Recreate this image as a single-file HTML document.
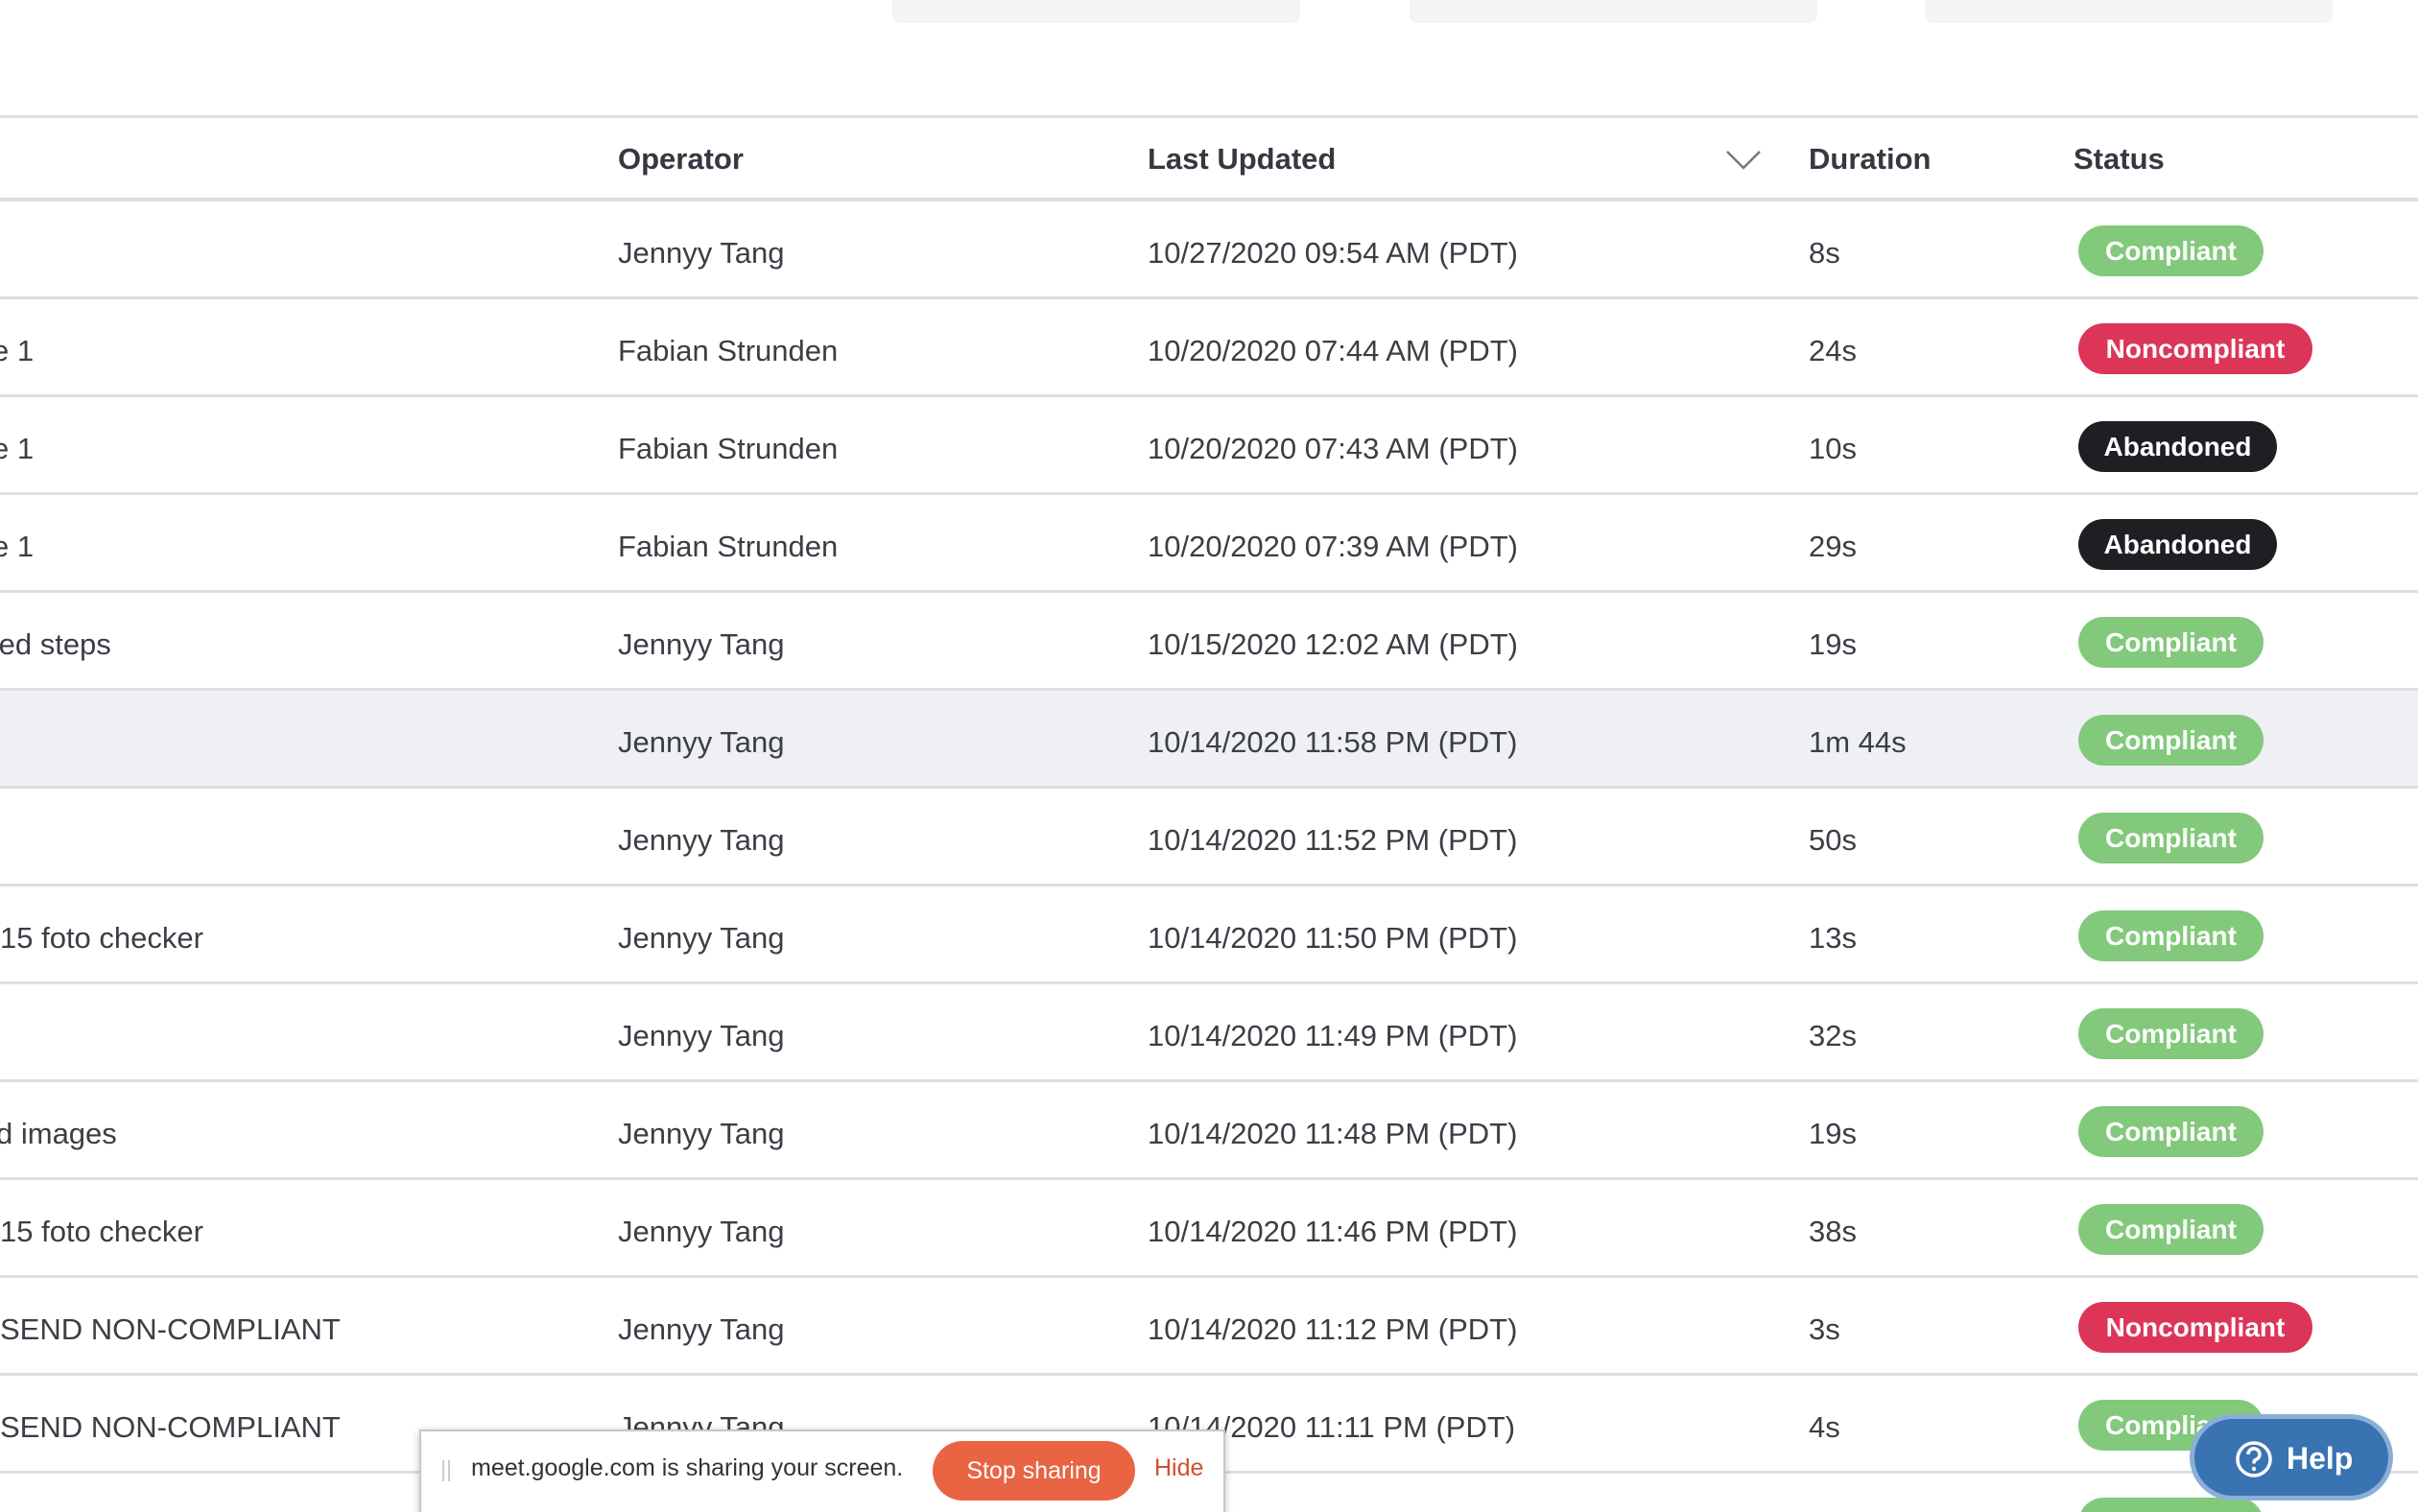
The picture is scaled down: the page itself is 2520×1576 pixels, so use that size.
<!DOCTYPE html>
<html><head><meta charset="utf-8"><style>
*{margin:0;padding:0;box-sizing:border-box}
html,body{width:2520px;height:1576px;overflow:hidden}
body{background:#fff;font-family:"Liberation Sans",sans-serif;color:#3b3e45;position:relative}
.tb{position:absolute;top:0;height:24px;width:425px;background:#f3f4f4;border-radius:0 0 8px 8px}
.hdr{position:absolute;left:0;width:2520px;top:120px;height:90px;border-top:3px solid #dcdfe2;border-bottom:4px solid #dcdfe2}
.h{position:absolute;top:25px;font-weight:bold;font-size:31px;color:#343840}
.row{position:absolute;left:0;width:2520px;height:102px;border-bottom:3px solid #dcdfe2}
.c{position:absolute;top:4px;line-height:100px;font-size:31px;white-space:nowrap}
.b{position:absolute;left:2166px;top:25px;height:53px;line-height:53px;border-radius:27px;color:#fff;font-weight:bold;font-size:28px;text-align:center}
.g{background:#82c97b;width:193px}.r{background:#dc3558;width:244px}.k{background:#1d1f23;width:207px}
</style></head><body>
<div class="tb" style="left:930px"></div><div class="tb" style="left:1469px"></div><div class="tb" style="left:2006px"></div>
<div class="hdr">
<div class="h" style="left:644px">Operator</div>
<div class="h" style="left:1196px">Last Updated</div>
<svg style="position:absolute;left:1798px;top:32px" width="38" height="24"><path d="M2 3 L19 20 L36 3" fill="none" stroke="#777" stroke-width="2.5"/></svg>
<div class="h" style="left:1885px">Duration</div>
<div class="h" style="left:2161px">Status</div>
</div>
<div class="row" style="top:210px"><div class="c" style="left:644px">Jennyy Tang</div><div class="c" style="left:1196px">10/27/2020 09:54 AM (PDT)</div><div class="c" style="left:1885px">8s</div><div class="b g">Compliant</div></div>
<div class="row" style="top:312px"><div class="c" style="left:-8px">e 1</div><div class="c" style="left:644px">Fabian Strunden</div><div class="c" style="left:1196px">10/20/2020 07:44 AM (PDT)</div><div class="c" style="left:1885px">24s</div><div class="b r">Noncompliant</div></div>
<div class="row" style="top:414px"><div class="c" style="left:-8px">e 1</div><div class="c" style="left:644px">Fabian Strunden</div><div class="c" style="left:1196px">10/20/2020 07:43 AM (PDT)</div><div class="c" style="left:1885px">10s</div><div class="b k">Abandoned</div></div>
<div class="row" style="top:516px"><div class="c" style="left:-8px">e 1</div><div class="c" style="left:644px">Fabian Strunden</div><div class="c" style="left:1196px">10/20/2020 07:39 AM (PDT)</div><div class="c" style="left:1885px">29s</div><div class="b k">Abandoned</div></div>
<div class="row" style="top:618px"><div class="c" style="left:-10px">ted steps</div><div class="c" style="left:644px">Jennyy Tang</div><div class="c" style="left:1196px">10/15/2020 12:02 AM (PDT)</div><div class="c" style="left:1885px">19s</div><div class="b g">Compliant</div></div>
<div class="row" style="top:720px;background:#eef0f3"><div class="c" style="left:644px">Jennyy Tang</div><div class="c" style="left:1196px">10/14/2020 11:58 PM (PDT)</div><div class="c" style="left:1885px">1m 44s</div><div class="b g">Compliant</div></div>
<div class="row" style="top:822px"><div class="c" style="left:644px">Jennyy Tang</div><div class="c" style="left:1196px">10/14/2020 11:52 PM (PDT)</div><div class="c" style="left:1885px">50s</div><div class="b g">Compliant</div></div>
<div class="row" style="top:924px"><div class="c" style="left:0px">15 foto checker</div><div class="c" style="left:644px">Jennyy Tang</div><div class="c" style="left:1196px">10/14/2020 11:50 PM (PDT)</div><div class="c" style="left:1885px">13s</div><div class="b g">Compliant</div></div>
<div class="row" style="top:1026px"><div class="c" style="left:644px">Jennyy Tang</div><div class="c" style="left:1196px">10/14/2020 11:49 PM (PDT)</div><div class="c" style="left:1885px">32s</div><div class="b g">Compliant</div></div>
<div class="row" style="top:1128px"><div class="c" style="left:-4px">d images</div><div class="c" style="left:644px">Jennyy Tang</div><div class="c" style="left:1196px">10/14/2020 11:48 PM (PDT)</div><div class="c" style="left:1885px">19s</div><div class="b g">Compliant</div></div>
<div class="row" style="top:1230px"><div class="c" style="left:0px">15 foto checker</div><div class="c" style="left:644px">Jennyy Tang</div><div class="c" style="left:1196px">10/14/2020 11:46 PM (PDT)</div><div class="c" style="left:1885px">38s</div><div class="b g">Compliant</div></div>
<div class="row" style="top:1332px"><div class="c" style="left:0px">SEND NON-COMPLIANT</div><div class="c" style="left:644px">Jennyy Tang</div><div class="c" style="left:1196px">10/14/2020 11:12 PM (PDT)</div><div class="c" style="left:1885px">3s</div><div class="b r">Noncompliant</div></div>
<div class="row" style="top:1434px"><div class="c" style="left:0px">SEND NON-COMPLIANT</div><div class="c" style="left:644px">Jennyy Tang</div><div class="c" style="left:1196px">10/14/2020 11:11 PM (PDT)</div><div class="c" style="left:1885px">4s</div><div class="b g">Compliant</div></div>
<div class="row" style="top:1537px;border:none"><div class="b g" style="top:24px"></div></div>
<div style="position:absolute;left:437px;top:1490px;width:840px;height:90px;background:#fff;border:2px solid #c8c8c8;box-shadow:0 2px 8px rgba(0,0,0,.25)">
<div style="position:absolute;left:22px;top:30px;width:8px;height:22px;border-left:2px solid #ccc;border-right:2px solid #ccc"></div>
<div style="position:absolute;left:52px;top:24px;font-size:25px;color:#333">meet.google.com is sharing your screen.</div>
<div style="position:absolute;left:533px;top:10px;width:211px;height:62px;border-radius:31px;background:#e96443;color:#fff;font-size:25px;line-height:62px;text-align:center">Stop sharing</div>
<div style="position:absolute;left:764px;top:24px;font-size:25px;color:#d0502e">Hide</div>
</div>
<div style="position:absolute;left:2282px;top:1474px;width:212px;height:90px;border-radius:45px;background:#3a73b2;border:5px solid #8aaed6;color:#fff;font-weight:bold;font-size:32px">
<svg style="position:absolute;left:42px;top:22px" width="40" height="40"><circle cx="20" cy="20" r="17" fill="none" stroke="#fff" stroke-width="3.5"/><path d="M14 15a6 6 0 1 1 8 5.5c-2 1-2 2-2 4" fill="none" stroke="#fff" stroke-width="3.5"/><circle cx="20" cy="30" r="2.2" fill="#fff"/></svg>
<div style="position:absolute;left:96px;top:23px">Help</div>
</div>
</body></html>
